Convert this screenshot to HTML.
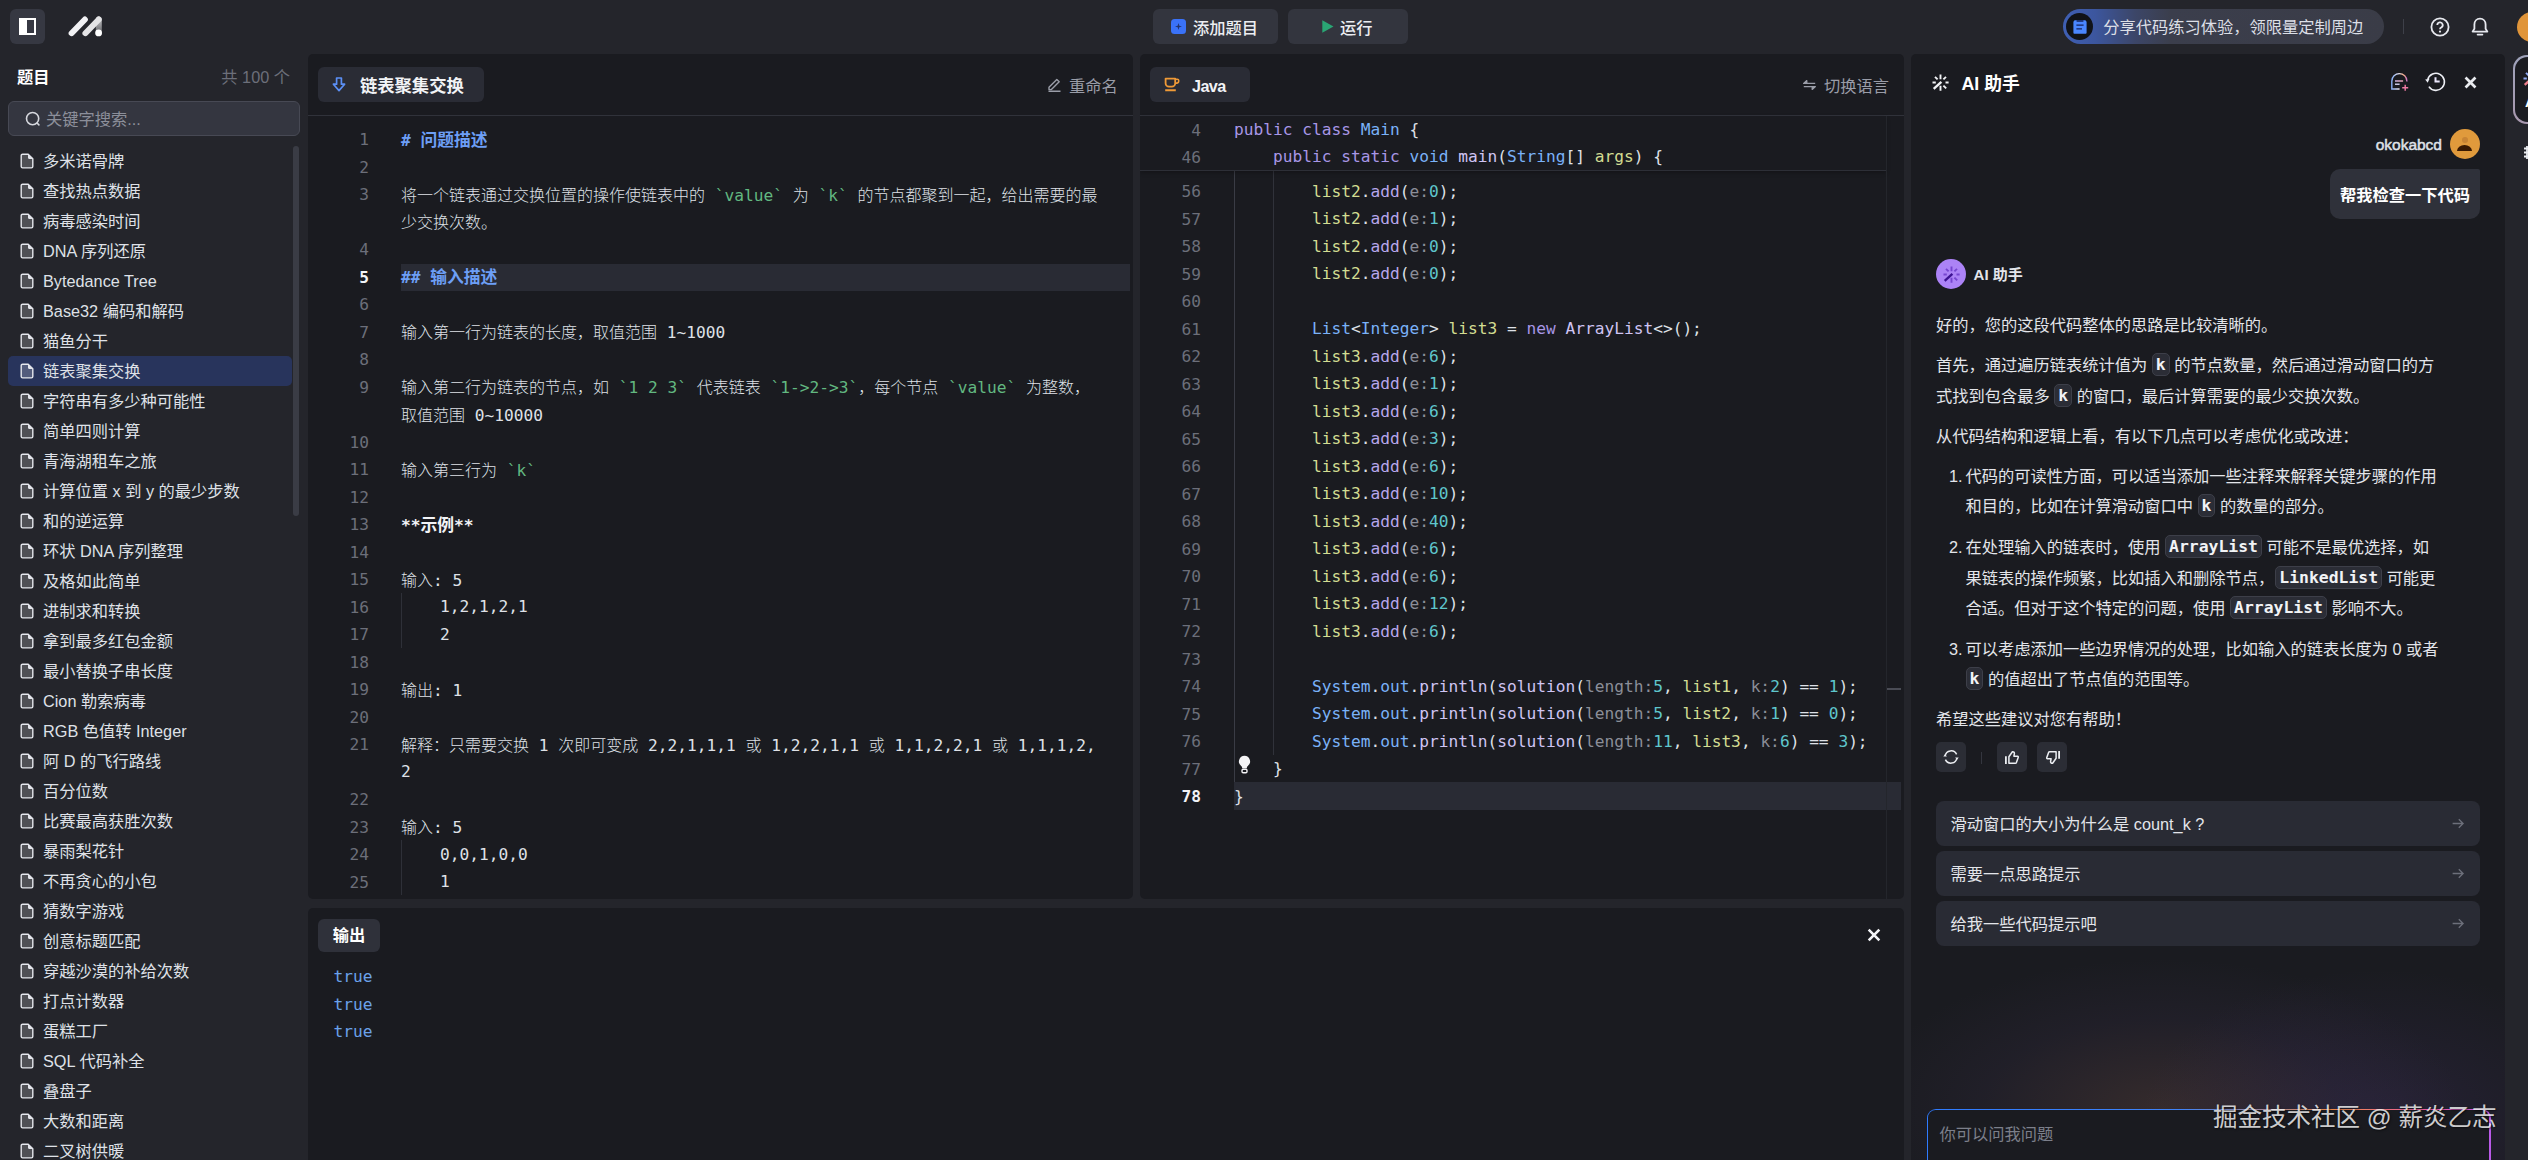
<!DOCTYPE html>
<html lang="zh-CN"><head><meta charset="utf-8"><title>豆包 MarsCode 代码练习</title>
<style>
*{box-sizing:border-box;margin:0;padding:0}
html,body{width:2528px;height:1160px;overflow:hidden;background:#24252b}
body{position:relative;font-family:"Liberation Sans","Noto Sans CJK SC",sans-serif;font-size:16.25px;color:#dfe1e7;-webkit-font-smoothing:antialiased}
.abs{position:absolute}
.panel{position:absolute;background:#1a1b20;border-radius:5px;overflow:hidden}
.mono{font-family:"DejaVu Sans Mono","Liberation Mono","Noto Sans CJK SC",monospace}
svg{display:block;overflow:visible}
/* top bar */
#tog{left:10px;top:9px;width:35px;height:35px;border-radius:6px;background:#363842}
.tbtn{top:9px;height:35px;border-radius:6px;background:#33353e;color:#eceef2;font-weight:500;font-size:16.25px;line-height:35px;white-space:nowrap}
#pill{left:2063px;top:9px;width:321px;height:35px;border-radius:18px;background:linear-gradient(90deg,#3f5fb4 0px,#3c569e 32px,#3c4668 72px,#3b3e4c 108px,#3a3c47 100%);color:#dcdfe6;line-height:35px;white-space:nowrap}
/* sidebar */
.it{position:absolute;left:8px;width:284px;height:30px;border-radius:5px;line-height:30px;white-space:nowrap;color:#dfe1e7}
.it span{position:absolute;left:35px;top:0}
.it svg{position:absolute;left:12px;top:7px}
.it.sel{background:#28345c}
/* editor */
.ln{position:absolute;height:27.5px;line-height:27.5px;margin-top:1.2px;text-align:right;color:#6c6f7a;font-size:16.2px;white-space:pre}
.cl{position:absolute;height:27.5px;line-height:27.5px;margin-top:.4px;font-size:16.2px;white-space:pre;color:#dfe1e7}
.tab{position:absolute;top:13px;height:35px;border-radius:6px;background:#2a2c35;color:#f2f3f6;font-weight:bold;font-size:17.3px;line-height:35px;white-space:nowrap}
.hdr{position:absolute;left:0;top:0;right:0;height:62px;border-bottom:1px solid #30323a}
.gray{color:#9a9da8}
/* syntax */
.k{color:#a896e6}.t{color:#7ab2f8}.f{color:#cfc4f3}.v{color:#d3dd92}.m{color:#b8a7ec}.n{color:#5fc6cc}.h{color:#8b8e98}.p{color:#dfe1e7}
.mh{color:#6d9ff6;font-weight:bold}.mc{color:#62b880}.mb{color:#f2f3f6;font-weight:bold}
.cj{font-family:"Noto Sans CJK SC",sans-serif;font-weight:300;font-size:16px}
.cjb{font-family:"Noto Sans CJK SC",sans-serif;font-weight:bold;font-size:16.8px}
/* ai */
.aip{position:absolute;left:25px;white-space:nowrap;line-height:30.5px;font-size:16.25px;color:#e3e5ea}
.ic{display:inline-block;font-family:"DejaVu Sans Mono","Liberation Mono",monospace;font-weight:bold;font-size:16.4px;line-height:21px;height:23px;padding:0 3px;margin:0 4.6px;border:1px solid #3d3f49;background:#2b2d36;border-radius:5px;color:#f2f3f6;vertical-align:1px}
.abtn{position:absolute;top:688px;width:30px;height:30px;border-radius:5px;background:#2b2d35}
.sug{position:absolute;left:25px;width:544px;height:45px;border-radius:8px;background:#292b34;line-height:45px;color:#e3e5ea;white-space:nowrap}
.sug span{position:absolute;left:14.6px;top:1.3px}
</style></head>
<body>
<div id="tog" class="abs"><svg class="abs" style="left:9px;top:9px" width="17" height="17" viewBox="0 0 17 17"><rect x="1" y="1" width="15" height="15" fill="none" stroke="#fff" stroke-width="2"/><rect x="0" y="0" width="8" height="17" fill="#fff"/></svg></div>
<svg class="abs" style="left:66px;top:14px" width="38" height="24" viewBox="0 0 38 24"><defs><linearGradient id="lg1" x1="0" y1="0" x2="0" y2="1"><stop offset="0" stop-color="#d6d6d8"/><stop offset=".35" stop-color="#a9a9ad"/><stop offset="1" stop-color="#66676b"/></linearGradient></defs><path d="M29.8 5.4 a3 3 0 0 1 6 0 V19 H29.8Z" fill="url(#lg1)"/><line x1="5.6" y1="19.2" x2="18.9" y2="5.5" stroke="#f1f1f4" stroke-width="5.9" stroke-linecap="round"/><line x1="19.4" y1="19.2" x2="32.7" y2="5.5" stroke="#e4e4e6" stroke-width="5.9" stroke-linecap="round"/><circle cx="32.6" cy="18.9" r="3.4" fill="#fff"/></svg>
<div class="tbtn abs" style="left:1153px;width:125px"><svg class="abs" style="left:18px;top:10px" width="15" height="15" viewBox="0 0 15 15"><rect width="15" height="15" rx="3.5" fill="#3a72f8"/><path d="M7.5 4 L8.3 6.7 L11 7.5 L8.3 8.3 L7.5 11 L6.7 8.3 L4 7.5 L6.7 6.7Z" fill="#22346e"/></svg><span class="abs" style="left:40px;top:1.5px">添加题目</span></div>
<div class="tbtn abs" style="left:1288px;width:120px"><svg class="abs" style="left:34px;top:11px" width="12" height="13" viewBox="0 0 12 13"><path d="M0.3 0.3 L11.5 6.5 L0.3 12.7Z" fill="#2aa574"/></svg><span class="abs" style="left:52px;top:1.5px">运行</span></div>
<div id="pill" class="abs"><div class="abs" style="left:2.6px;top:3.6px;width:27.8px;height:27.8px;border-radius:50%;background:#111318"></div><svg class="abs" style="left:9.6px;top:10px" width="14" height="15" viewBox="0 0 14 15"><path d="M1.6 1.2h10.8l1.2 1.6v11a.9.9 0 0 1-.9.9H1.3a.9.9 0 0 1-.9-.9v-11z" fill="#4a86ff"/><path d="M3.6 2h6.8M3.4 6.2h7.2M3.4 9.8h5.6" stroke="#15235e" stroke-width="1.3"/></svg><span class="abs" style="left:40.2px;top:1px">分享代码练习体验，领限量定制周边</span></div>
<div class="abs" style="left:2403px;top:19px;width:1px;height:15px;background:#3e4049"></div>
<svg class="abs" style="left:2430px;top:17px" width="20" height="20" viewBox="0 0 20 20"><circle cx="10" cy="10" r="8.6" fill="none" stroke="#e6e8ee" stroke-width="1.8"/><path d="M7.3 8.1a2.7 2.7 0 1 1 3.9 2.4c-.8.45-1.2.9-1.2 1.8" fill="none" stroke="#e6e8ee" stroke-width="1.8"/><circle cx="10" cy="14.6" r="1.1" fill="#e6e8ee"/></svg>
<svg class="abs" style="left:2470px;top:17px" width="20" height="20" viewBox="0 0 20 20"><path d="M10 1.6c-3.3 0-5.6 2.5-5.6 5.8v4.3L2.6 14.6h14.8l-1.8-2.9V7.4c0-3.3-2.3-5.8-5.6-5.8z" fill="none" stroke="#e6e8ee" stroke-width="1.8" stroke-linejoin="round"/><path d="M7.6 17.6h4.8" stroke="#e6e8ee" stroke-width="1.8" stroke-linecap="round"/></svg>
<div class="abs" style="left:2517px;top:12px;width:30px;height:30px;border-radius:50%;background:#e0953a"></div>
<div class="abs" style="left:17px;top:65px;font-weight:bold;font-size:16.25px;line-height:25px;color:#fff">题目</div>
<div class="abs" style="left:160px;width:130px;text-align:right;top:65px;line-height:25px;color:#6c6f7a;white-space:nowrap">共 100 个</div>
<div class="abs" style="left:8px;top:101px;width:292px;height:35px;border-radius:6px;background:#343640;border:1px solid #474954"><svg class="abs" style="left:16px;top:9px" width="16" height="16" viewBox="0 0 16 16"><circle cx="7.6" cy="7.6" r="6.1" fill="none" stroke="#d6d8de" stroke-width="1.6"/><path d="M12.3 12.3l1.6 1.6" stroke="#d6d8de" stroke-width="1.6" stroke-linecap="round"/></svg><span class="abs" style="left:37px;top:0;line-height:34px;color:#8c8f9a">关键字搜索...</span></div>
<div class="it" style="top:146px"><svg width="14" height="16" viewBox="0 0 14 16"><path d="M2.6 1.2h5.6l4.6 4.5v7.9c0 .8-.6 1.3-1.4 1.3H2.6c-.8 0-1.4-.5-1.4-1.3V2.5c0-.8.6-1.3 1.4-1.3z" fill="rgba(255,255,255,.2)" stroke="#e4e6ec" stroke-width="1.4" stroke-linejoin="round"/><path d="M8 1.2l4.8 4.7H9.2c-.7 0-1.2-.5-1.2-1.2z" fill="#e4e6ec"/></svg><span>多米诺骨牌</span></div>
<div class="it" style="top:176px"><svg width="14" height="16" viewBox="0 0 14 16"><path d="M2.6 1.2h5.6l4.6 4.5v7.9c0 .8-.6 1.3-1.4 1.3H2.6c-.8 0-1.4-.5-1.4-1.3V2.5c0-.8.6-1.3 1.4-1.3z" fill="rgba(255,255,255,.2)" stroke="#e4e6ec" stroke-width="1.4" stroke-linejoin="round"/><path d="M8 1.2l4.8 4.7H9.2c-.7 0-1.2-.5-1.2-1.2z" fill="#e4e6ec"/></svg><span>查找热点数据</span></div>
<div class="it" style="top:206px"><svg width="14" height="16" viewBox="0 0 14 16"><path d="M2.6 1.2h5.6l4.6 4.5v7.9c0 .8-.6 1.3-1.4 1.3H2.6c-.8 0-1.4-.5-1.4-1.3V2.5c0-.8.6-1.3 1.4-1.3z" fill="rgba(255,255,255,.2)" stroke="#e4e6ec" stroke-width="1.4" stroke-linejoin="round"/><path d="M8 1.2l4.8 4.7H9.2c-.7 0-1.2-.5-1.2-1.2z" fill="#e4e6ec"/></svg><span>病毒感染时间</span></div>
<div class="it" style="top:236px"><svg width="14" height="16" viewBox="0 0 14 16"><path d="M2.6 1.2h5.6l4.6 4.5v7.9c0 .8-.6 1.3-1.4 1.3H2.6c-.8 0-1.4-.5-1.4-1.3V2.5c0-.8.6-1.3 1.4-1.3z" fill="rgba(255,255,255,.2)" stroke="#e4e6ec" stroke-width="1.4" stroke-linejoin="round"/><path d="M8 1.2l4.8 4.7H9.2c-.7 0-1.2-.5-1.2-1.2z" fill="#e4e6ec"/></svg><span>DNA 序列还原</span></div>
<div class="it" style="top:266px"><svg width="14" height="16" viewBox="0 0 14 16"><path d="M2.6 1.2h5.6l4.6 4.5v7.9c0 .8-.6 1.3-1.4 1.3H2.6c-.8 0-1.4-.5-1.4-1.3V2.5c0-.8.6-1.3 1.4-1.3z" fill="rgba(255,255,255,.2)" stroke="#e4e6ec" stroke-width="1.4" stroke-linejoin="round"/><path d="M8 1.2l4.8 4.7H9.2c-.7 0-1.2-.5-1.2-1.2z" fill="#e4e6ec"/></svg><span>Bytedance Tree</span></div>
<div class="it" style="top:296px"><svg width="14" height="16" viewBox="0 0 14 16"><path d="M2.6 1.2h5.6l4.6 4.5v7.9c0 .8-.6 1.3-1.4 1.3H2.6c-.8 0-1.4-.5-1.4-1.3V2.5c0-.8.6-1.3 1.4-1.3z" fill="rgba(255,255,255,.2)" stroke="#e4e6ec" stroke-width="1.4" stroke-linejoin="round"/><path d="M8 1.2l4.8 4.7H9.2c-.7 0-1.2-.5-1.2-1.2z" fill="#e4e6ec"/></svg><span>Base32 编码和解码</span></div>
<div class="it" style="top:326px"><svg width="14" height="16" viewBox="0 0 14 16"><path d="M2.6 1.2h5.6l4.6 4.5v7.9c0 .8-.6 1.3-1.4 1.3H2.6c-.8 0-1.4-.5-1.4-1.3V2.5c0-.8.6-1.3 1.4-1.3z" fill="rgba(255,255,255,.2)" stroke="#e4e6ec" stroke-width="1.4" stroke-linejoin="round"/><path d="M8 1.2l4.8 4.7H9.2c-.7 0-1.2-.5-1.2-1.2z" fill="#e4e6ec"/></svg><span>猫鱼分干</span></div>
<div class="it sel" style="top:356px"><svg width="14" height="16" viewBox="0 0 14 16"><path d="M2.6 1.2h5.6l4.6 4.5v7.9c0 .8-.6 1.3-1.4 1.3H2.6c-.8 0-1.4-.5-1.4-1.3V2.5c0-.8.6-1.3 1.4-1.3z" fill="rgba(255,255,255,.2)" stroke="#e4e6ec" stroke-width="1.4" stroke-linejoin="round"/><path d="M8 1.2l4.8 4.7H9.2c-.7 0-1.2-.5-1.2-1.2z" fill="#e4e6ec"/></svg><span>链表聚集交换</span></div>
<div class="it" style="top:386px"><svg width="14" height="16" viewBox="0 0 14 16"><path d="M2.6 1.2h5.6l4.6 4.5v7.9c0 .8-.6 1.3-1.4 1.3H2.6c-.8 0-1.4-.5-1.4-1.3V2.5c0-.8.6-1.3 1.4-1.3z" fill="rgba(255,255,255,.2)" stroke="#e4e6ec" stroke-width="1.4" stroke-linejoin="round"/><path d="M8 1.2l4.8 4.7H9.2c-.7 0-1.2-.5-1.2-1.2z" fill="#e4e6ec"/></svg><span>字符串有多少种可能性</span></div>
<div class="it" style="top:416px"><svg width="14" height="16" viewBox="0 0 14 16"><path d="M2.6 1.2h5.6l4.6 4.5v7.9c0 .8-.6 1.3-1.4 1.3H2.6c-.8 0-1.4-.5-1.4-1.3V2.5c0-.8.6-1.3 1.4-1.3z" fill="rgba(255,255,255,.2)" stroke="#e4e6ec" stroke-width="1.4" stroke-linejoin="round"/><path d="M8 1.2l4.8 4.7H9.2c-.7 0-1.2-.5-1.2-1.2z" fill="#e4e6ec"/></svg><span>简单四则计算</span></div>
<div class="it" style="top:446px"><svg width="14" height="16" viewBox="0 0 14 16"><path d="M2.6 1.2h5.6l4.6 4.5v7.9c0 .8-.6 1.3-1.4 1.3H2.6c-.8 0-1.4-.5-1.4-1.3V2.5c0-.8.6-1.3 1.4-1.3z" fill="rgba(255,255,255,.2)" stroke="#e4e6ec" stroke-width="1.4" stroke-linejoin="round"/><path d="M8 1.2l4.8 4.7H9.2c-.7 0-1.2-.5-1.2-1.2z" fill="#e4e6ec"/></svg><span>青海湖租车之旅</span></div>
<div class="it" style="top:476px"><svg width="14" height="16" viewBox="0 0 14 16"><path d="M2.6 1.2h5.6l4.6 4.5v7.9c0 .8-.6 1.3-1.4 1.3H2.6c-.8 0-1.4-.5-1.4-1.3V2.5c0-.8.6-1.3 1.4-1.3z" fill="rgba(255,255,255,.2)" stroke="#e4e6ec" stroke-width="1.4" stroke-linejoin="round"/><path d="M8 1.2l4.8 4.7H9.2c-.7 0-1.2-.5-1.2-1.2z" fill="#e4e6ec"/></svg><span>计算位置 x 到 y 的最少步数</span></div>
<div class="it" style="top:506px"><svg width="14" height="16" viewBox="0 0 14 16"><path d="M2.6 1.2h5.6l4.6 4.5v7.9c0 .8-.6 1.3-1.4 1.3H2.6c-.8 0-1.4-.5-1.4-1.3V2.5c0-.8.6-1.3 1.4-1.3z" fill="rgba(255,255,255,.2)" stroke="#e4e6ec" stroke-width="1.4" stroke-linejoin="round"/><path d="M8 1.2l4.8 4.7H9.2c-.7 0-1.2-.5-1.2-1.2z" fill="#e4e6ec"/></svg><span>和的逆运算</span></div>
<div class="it" style="top:536px"><svg width="14" height="16" viewBox="0 0 14 16"><path d="M2.6 1.2h5.6l4.6 4.5v7.9c0 .8-.6 1.3-1.4 1.3H2.6c-.8 0-1.4-.5-1.4-1.3V2.5c0-.8.6-1.3 1.4-1.3z" fill="rgba(255,255,255,.2)" stroke="#e4e6ec" stroke-width="1.4" stroke-linejoin="round"/><path d="M8 1.2l4.8 4.7H9.2c-.7 0-1.2-.5-1.2-1.2z" fill="#e4e6ec"/></svg><span>环状 DNA 序列整理</span></div>
<div class="it" style="top:566px"><svg width="14" height="16" viewBox="0 0 14 16"><path d="M2.6 1.2h5.6l4.6 4.5v7.9c0 .8-.6 1.3-1.4 1.3H2.6c-.8 0-1.4-.5-1.4-1.3V2.5c0-.8.6-1.3 1.4-1.3z" fill="rgba(255,255,255,.2)" stroke="#e4e6ec" stroke-width="1.4" stroke-linejoin="round"/><path d="M8 1.2l4.8 4.7H9.2c-.7 0-1.2-.5-1.2-1.2z" fill="#e4e6ec"/></svg><span>及格如此简单</span></div>
<div class="it" style="top:596px"><svg width="14" height="16" viewBox="0 0 14 16"><path d="M2.6 1.2h5.6l4.6 4.5v7.9c0 .8-.6 1.3-1.4 1.3H2.6c-.8 0-1.4-.5-1.4-1.3V2.5c0-.8.6-1.3 1.4-1.3z" fill="rgba(255,255,255,.2)" stroke="#e4e6ec" stroke-width="1.4" stroke-linejoin="round"/><path d="M8 1.2l4.8 4.7H9.2c-.7 0-1.2-.5-1.2-1.2z" fill="#e4e6ec"/></svg><span>进制求和转换</span></div>
<div class="it" style="top:626px"><svg width="14" height="16" viewBox="0 0 14 16"><path d="M2.6 1.2h5.6l4.6 4.5v7.9c0 .8-.6 1.3-1.4 1.3H2.6c-.8 0-1.4-.5-1.4-1.3V2.5c0-.8.6-1.3 1.4-1.3z" fill="rgba(255,255,255,.2)" stroke="#e4e6ec" stroke-width="1.4" stroke-linejoin="round"/><path d="M8 1.2l4.8 4.7H9.2c-.7 0-1.2-.5-1.2-1.2z" fill="#e4e6ec"/></svg><span>拿到最多红包金额</span></div>
<div class="it" style="top:656px"><svg width="14" height="16" viewBox="0 0 14 16"><path d="M2.6 1.2h5.6l4.6 4.5v7.9c0 .8-.6 1.3-1.4 1.3H2.6c-.8 0-1.4-.5-1.4-1.3V2.5c0-.8.6-1.3 1.4-1.3z" fill="rgba(255,255,255,.2)" stroke="#e4e6ec" stroke-width="1.4" stroke-linejoin="round"/><path d="M8 1.2l4.8 4.7H9.2c-.7 0-1.2-.5-1.2-1.2z" fill="#e4e6ec"/></svg><span>最小替换子串长度</span></div>
<div class="it" style="top:686px"><svg width="14" height="16" viewBox="0 0 14 16"><path d="M2.6 1.2h5.6l4.6 4.5v7.9c0 .8-.6 1.3-1.4 1.3H2.6c-.8 0-1.4-.5-1.4-1.3V2.5c0-.8.6-1.3 1.4-1.3z" fill="rgba(255,255,255,.2)" stroke="#e4e6ec" stroke-width="1.4" stroke-linejoin="round"/><path d="M8 1.2l4.8 4.7H9.2c-.7 0-1.2-.5-1.2-1.2z" fill="#e4e6ec"/></svg><span>Cion 勒索病毒</span></div>
<div class="it" style="top:716px"><svg width="14" height="16" viewBox="0 0 14 16"><path d="M2.6 1.2h5.6l4.6 4.5v7.9c0 .8-.6 1.3-1.4 1.3H2.6c-.8 0-1.4-.5-1.4-1.3V2.5c0-.8.6-1.3 1.4-1.3z" fill="rgba(255,255,255,.2)" stroke="#e4e6ec" stroke-width="1.4" stroke-linejoin="round"/><path d="M8 1.2l4.8 4.7H9.2c-.7 0-1.2-.5-1.2-1.2z" fill="#e4e6ec"/></svg><span>RGB 色值转 Integer</span></div>
<div class="it" style="top:746px"><svg width="14" height="16" viewBox="0 0 14 16"><path d="M2.6 1.2h5.6l4.6 4.5v7.9c0 .8-.6 1.3-1.4 1.3H2.6c-.8 0-1.4-.5-1.4-1.3V2.5c0-.8.6-1.3 1.4-1.3z" fill="rgba(255,255,255,.2)" stroke="#e4e6ec" stroke-width="1.4" stroke-linejoin="round"/><path d="M8 1.2l4.8 4.7H9.2c-.7 0-1.2-.5-1.2-1.2z" fill="#e4e6ec"/></svg><span>阿 D 的飞行路线</span></div>
<div class="it" style="top:776px"><svg width="14" height="16" viewBox="0 0 14 16"><path d="M2.6 1.2h5.6l4.6 4.5v7.9c0 .8-.6 1.3-1.4 1.3H2.6c-.8 0-1.4-.5-1.4-1.3V2.5c0-.8.6-1.3 1.4-1.3z" fill="rgba(255,255,255,.2)" stroke="#e4e6ec" stroke-width="1.4" stroke-linejoin="round"/><path d="M8 1.2l4.8 4.7H9.2c-.7 0-1.2-.5-1.2-1.2z" fill="#e4e6ec"/></svg><span>百分位数</span></div>
<div class="it" style="top:806px"><svg width="14" height="16" viewBox="0 0 14 16"><path d="M2.6 1.2h5.6l4.6 4.5v7.9c0 .8-.6 1.3-1.4 1.3H2.6c-.8 0-1.4-.5-1.4-1.3V2.5c0-.8.6-1.3 1.4-1.3z" fill="rgba(255,255,255,.2)" stroke="#e4e6ec" stroke-width="1.4" stroke-linejoin="round"/><path d="M8 1.2l4.8 4.7H9.2c-.7 0-1.2-.5-1.2-1.2z" fill="#e4e6ec"/></svg><span>比赛最高获胜次数</span></div>
<div class="it" style="top:836px"><svg width="14" height="16" viewBox="0 0 14 16"><path d="M2.6 1.2h5.6l4.6 4.5v7.9c0 .8-.6 1.3-1.4 1.3H2.6c-.8 0-1.4-.5-1.4-1.3V2.5c0-.8.6-1.3 1.4-1.3z" fill="rgba(255,255,255,.2)" stroke="#e4e6ec" stroke-width="1.4" stroke-linejoin="round"/><path d="M8 1.2l4.8 4.7H9.2c-.7 0-1.2-.5-1.2-1.2z" fill="#e4e6ec"/></svg><span>暴雨梨花针</span></div>
<div class="it" style="top:866px"><svg width="14" height="16" viewBox="0 0 14 16"><path d="M2.6 1.2h5.6l4.6 4.5v7.9c0 .8-.6 1.3-1.4 1.3H2.6c-.8 0-1.4-.5-1.4-1.3V2.5c0-.8.6-1.3 1.4-1.3z" fill="rgba(255,255,255,.2)" stroke="#e4e6ec" stroke-width="1.4" stroke-linejoin="round"/><path d="M8 1.2l4.8 4.7H9.2c-.7 0-1.2-.5-1.2-1.2z" fill="#e4e6ec"/></svg><span>不再贪心的小包</span></div>
<div class="it" style="top:896px"><svg width="14" height="16" viewBox="0 0 14 16"><path d="M2.6 1.2h5.6l4.6 4.5v7.9c0 .8-.6 1.3-1.4 1.3H2.6c-.8 0-1.4-.5-1.4-1.3V2.5c0-.8.6-1.3 1.4-1.3z" fill="rgba(255,255,255,.2)" stroke="#e4e6ec" stroke-width="1.4" stroke-linejoin="round"/><path d="M8 1.2l4.8 4.7H9.2c-.7 0-1.2-.5-1.2-1.2z" fill="#e4e6ec"/></svg><span>猜数字游戏</span></div>
<div class="it" style="top:926px"><svg width="14" height="16" viewBox="0 0 14 16"><path d="M2.6 1.2h5.6l4.6 4.5v7.9c0 .8-.6 1.3-1.4 1.3H2.6c-.8 0-1.4-.5-1.4-1.3V2.5c0-.8.6-1.3 1.4-1.3z" fill="rgba(255,255,255,.2)" stroke="#e4e6ec" stroke-width="1.4" stroke-linejoin="round"/><path d="M8 1.2l4.8 4.7H9.2c-.7 0-1.2-.5-1.2-1.2z" fill="#e4e6ec"/></svg><span>创意标题匹配</span></div>
<div class="it" style="top:956px"><svg width="14" height="16" viewBox="0 0 14 16"><path d="M2.6 1.2h5.6l4.6 4.5v7.9c0 .8-.6 1.3-1.4 1.3H2.6c-.8 0-1.4-.5-1.4-1.3V2.5c0-.8.6-1.3 1.4-1.3z" fill="rgba(255,255,255,.2)" stroke="#e4e6ec" stroke-width="1.4" stroke-linejoin="round"/><path d="M8 1.2l4.8 4.7H9.2c-.7 0-1.2-.5-1.2-1.2z" fill="#e4e6ec"/></svg><span>穿越沙漠的补给次数</span></div>
<div class="it" style="top:986px"><svg width="14" height="16" viewBox="0 0 14 16"><path d="M2.6 1.2h5.6l4.6 4.5v7.9c0 .8-.6 1.3-1.4 1.3H2.6c-.8 0-1.4-.5-1.4-1.3V2.5c0-.8.6-1.3 1.4-1.3z" fill="rgba(255,255,255,.2)" stroke="#e4e6ec" stroke-width="1.4" stroke-linejoin="round"/><path d="M8 1.2l4.8 4.7H9.2c-.7 0-1.2-.5-1.2-1.2z" fill="#e4e6ec"/></svg><span>打点计数器</span></div>
<div class="it" style="top:1016px"><svg width="14" height="16" viewBox="0 0 14 16"><path d="M2.6 1.2h5.6l4.6 4.5v7.9c0 .8-.6 1.3-1.4 1.3H2.6c-.8 0-1.4-.5-1.4-1.3V2.5c0-.8.6-1.3 1.4-1.3z" fill="rgba(255,255,255,.2)" stroke="#e4e6ec" stroke-width="1.4" stroke-linejoin="round"/><path d="M8 1.2l4.8 4.7H9.2c-.7 0-1.2-.5-1.2-1.2z" fill="#e4e6ec"/></svg><span>蛋糕工厂</span></div>
<div class="it" style="top:1046px"><svg width="14" height="16" viewBox="0 0 14 16"><path d="M2.6 1.2h5.6l4.6 4.5v7.9c0 .8-.6 1.3-1.4 1.3H2.6c-.8 0-1.4-.5-1.4-1.3V2.5c0-.8.6-1.3 1.4-1.3z" fill="rgba(255,255,255,.2)" stroke="#e4e6ec" stroke-width="1.4" stroke-linejoin="round"/><path d="M8 1.2l4.8 4.7H9.2c-.7 0-1.2-.5-1.2-1.2z" fill="#e4e6ec"/></svg><span>SQL 代码补全</span></div>
<div class="it" style="top:1076px"><svg width="14" height="16" viewBox="0 0 14 16"><path d="M2.6 1.2h5.6l4.6 4.5v7.9c0 .8-.6 1.3-1.4 1.3H2.6c-.8 0-1.4-.5-1.4-1.3V2.5c0-.8.6-1.3 1.4-1.3z" fill="rgba(255,255,255,.2)" stroke="#e4e6ec" stroke-width="1.4" stroke-linejoin="round"/><path d="M8 1.2l4.8 4.7H9.2c-.7 0-1.2-.5-1.2-1.2z" fill="#e4e6ec"/></svg><span>叠盘子</span></div>
<div class="it" style="top:1106px"><svg width="14" height="16" viewBox="0 0 14 16"><path d="M2.6 1.2h5.6l4.6 4.5v7.9c0 .8-.6 1.3-1.4 1.3H2.6c-.8 0-1.4-.5-1.4-1.3V2.5c0-.8.6-1.3 1.4-1.3z" fill="rgba(255,255,255,.2)" stroke="#e4e6ec" stroke-width="1.4" stroke-linejoin="round"/><path d="M8 1.2l4.8 4.7H9.2c-.7 0-1.2-.5-1.2-1.2z" fill="#e4e6ec"/></svg><span>大数和距离</span></div>
<div class="it" style="top:1136px"><svg width="14" height="16" viewBox="0 0 14 16"><path d="M2.6 1.2h5.6l4.6 4.5v7.9c0 .8-.6 1.3-1.4 1.3H2.6c-.8 0-1.4-.5-1.4-1.3V2.5c0-.8.6-1.3 1.4-1.3z" fill="rgba(255,255,255,.2)" stroke="#e4e6ec" stroke-width="1.4" stroke-linejoin="round"/><path d="M8 1.2l4.8 4.7H9.2c-.7 0-1.2-.5-1.2-1.2z" fill="#e4e6ec"/></svg><span>二叉树供暖</span></div>
<div class="abs" style="left:293px;top:146px;width:6px;height:370px;border-radius:3px;background:#3a3c45"></div>
<div class="panel" style="left:308px;top:54px;width:825px;height:845px">
<div class="hdr"></div>
<div class="tab" style="left:10px;width:166px"><svg class="abs" style="left:14px;top:10px" width="14" height="15" viewBox="0 0 14 15"><path d="M4.6 1h4.8v6.2h3.2L7 13.6 1.4 7.2h3.2z" fill="none" stroke="#5b8ff5" stroke-width="1.7" stroke-linejoin="round"/></svg><span class="abs" style="left:42px;top:1.8px">链表聚集交换</span></div>
<svg class="abs" style="left:738.5px;top:22.6px" width="15" height="15" viewBox="0 0 15 15"><path d="M2 10.2L9.8 2.4l2.4 2.4L4.4 12.6H2z" fill="none" stroke="#9a9da8" stroke-width="1.4" stroke-linejoin="round"/><path d="M1.5 14.2h12" stroke="#9a9da8" stroke-width="1.4"/></svg>
<div class="abs gray" style="left:761px;top:18px;line-height:28px;white-space:nowrap">重命名</div>
<div class="abs" style="left:93px;top:209.50px;width:729px;height:27px;background:#292b34"></div>
<div class="abs" style="left:93px;top:538.75px;width:1px;height:55.00px;background:#2e3038"></div>
<div class="abs" style="left:93px;top:786.25px;width:1px;height:55.00px;background:#2e3038"></div>
<div class="ln mono" style="left:0;width:61px;top:71.25px">1</div>
<div class="cl mono" style="left:93px;top:71.25px"><span class="mh"># <span class="cjb">问题描述</span></span></div>
<div class="ln mono" style="left:0;width:61px;top:98.75px">2</div>
<div class="ln mono" style="left:0;width:61px;top:126.25px">3</div>
<div class="cl mono" style="left:93px;top:126.25px"><span class="cj">将一个链表通过交换位置的操作使链表中的</span> <span class="mc">`value`</span> <span class="cj">为</span> <span class="mc">`k`</span> <span class="cj">的节点都聚到一起，给出需要的最</span></div>
<div class="cl mono" style="left:93px;top:153.75px"><span class="cj">少交换次数。</span></div>
<div class="ln mono" style="left:0;width:61px;top:181.25px">4</div>
<div class="ln mono" style="left:0;width:61px;top:208.75px;color:#f2f3f6;font-weight:bold">5</div>
<div class="cl mono" style="left:93px;top:208.75px"><span class="mh">## <span class="cjb">输入描述</span></span></div>
<div class="ln mono" style="left:0;width:61px;top:236.25px">6</div>
<div class="ln mono" style="left:0;width:61px;top:263.75px">7</div>
<div class="cl mono" style="left:93px;top:263.75px"><span class="cj">输入第一行为链表的长度，取值范围</span> 1~1000</div>
<div class="ln mono" style="left:0;width:61px;top:291.25px">8</div>
<div class="ln mono" style="left:0;width:61px;top:318.75px">9</div>
<div class="cl mono" style="left:93px;top:318.75px"><span class="cj">输入第二行为链表的节点，如</span> <span class="mc">`1 2 3`</span> <span class="cj">代表链表</span> <span class="mc">`1-&gt;2-&gt;3`</span><span class="cj">，每个节点</span> <span class="mc">`value`</span> <span class="cj">为整数，</span></div>
<div class="cl mono" style="left:93px;top:346.25px"><span class="cj">取值范围</span> 0~10000</div>
<div class="ln mono" style="left:0;width:61px;top:373.75px">10</div>
<div class="ln mono" style="left:0;width:61px;top:401.25px">11</div>
<div class="cl mono" style="left:93px;top:401.25px"><span class="cj">输入第三行为</span> <span class="mc">`k`</span></div>
<div class="ln mono" style="left:0;width:61px;top:428.75px">12</div>
<div class="ln mono" style="left:0;width:61px;top:456.25px">13</div>
<div class="cl mono" style="left:93px;top:456.25px"><span class="mb">**<span class="cjb">示例</span>**</span></div>
<div class="ln mono" style="left:0;width:61px;top:483.75px">14</div>
<div class="ln mono" style="left:0;width:61px;top:511.25px">15</div>
<div class="cl mono" style="left:93px;top:511.25px"><span class="cj">输入</span>: 5</div>
<div class="ln mono" style="left:0;width:61px;top:538.75px">16</div>
<div class="cl mono" style="left:93px;top:538.75px">    1,2,1,2,1</div>
<div class="ln mono" style="left:0;width:61px;top:566.25px">17</div>
<div class="cl mono" style="left:93px;top:566.25px">    2</div>
<div class="ln mono" style="left:0;width:61px;top:593.75px">18</div>
<div class="ln mono" style="left:0;width:61px;top:621.25px">19</div>
<div class="cl mono" style="left:93px;top:621.25px"><span class="cj">输出</span>: 1</div>
<div class="ln mono" style="left:0;width:61px;top:648.75px">20</div>
<div class="ln mono" style="left:0;width:61px;top:676.25px">21</div>
<div class="cl mono" style="left:93px;top:676.25px"><span class="cj">解释：只需要交换</span> 1 <span class="cj">次即可变成</span> 2,2,1,1,1 <span class="cj">或</span> 1,2,2,1,1 <span class="cj">或</span> 1,1,2,2,1 <span class="cj">或</span> 1,1,1,2,</div>
<div class="cl mono" style="left:93px;top:703.75px">2</div>
<div class="ln mono" style="left:0;width:61px;top:731.25px">22</div>
<div class="ln mono" style="left:0;width:61px;top:758.75px">23</div>
<div class="cl mono" style="left:93px;top:758.75px"><span class="cj">输入</span>: 5</div>
<div class="ln mono" style="left:0;width:61px;top:786.25px">24</div>
<div class="cl mono" style="left:93px;top:786.25px">    0,0,1,0,0</div>
<div class="ln mono" style="left:0;width:61px;top:813.75px">25</div>
<div class="cl mono" style="left:93px;top:813.75px">    1</div>
</div>
<div class="panel" style="left:1140px;top:54px;width:764px;height:845px">
<div class="hdr"></div>
<div class="tab" style="left:10px;width:100px"><svg class="abs" style="left:14px;top:10px" width="16" height="15" viewBox="0 0 16 15"><path d="M1.6 1.6h9.6v4.6a3.4 3.4 0 0 1-3.4 3.4H5a3.4 3.4 0 0 1-3.4-3.4z" fill="none" stroke="#f09a37" stroke-width="1.8" stroke-linejoin="round"/><path d="M11.2 2.2h2.2a1.3 1.3 0 0 1 1.3 1.3v.6a2 2 0 0 1-2 2h-1.5" fill="none" stroke="#f09a37" stroke-width="1.6"/><path d="M1.2 13.3h10.6" stroke="#f09a37" stroke-width="1.9"/></svg><span class="abs" style="left:42px;top:1.5px;font-size:16.2px;letter-spacing:-.6px">Java</span></div>
<svg class="abs" style="left:662.5px;top:26px" width="13" height="10" viewBox="0 0 13 10"><path d="M.6 3.4h11.6M.6 3.4L3.8.6v2.8z" fill="#9a9da8" stroke="#9a9da8" stroke-width="1.3" stroke-linejoin="round"/><path d="M12.4 6.6H.8M12.4 6.6L9.2 9.4V6.6z" fill="#9a9da8" stroke="#9a9da8" stroke-width="1.3" stroke-linejoin="round"/></svg>
<div class="abs gray" style="left:684px;top:18px;line-height:28px;white-space:nowrap">切换语言</div>
<div class="abs" style="left:94px;top:728.25px;width:667px;height:27.5px;background:#292b34"></div>
<div class="abs" style="left:94px;top:117px;width:1px;height:611.25px;background:#3a3c45"></div>
<div class="abs" style="left:133px;top:117px;width:1px;height:583.75px;background:#30323a"></div>
<div class="ln mono" style="left:0;width:61px;top:123.25px">56</div>
<div class="cl mono" style="left:94px;top:123.25px">        <span class="v">list2</span><span class="p">.</span><span class="m">add</span><span class="p">(</span><span class="h ih">e:</span><span class="n">0</span><span class="p">);</span></div>
<div class="ln mono" style="left:0;width:61px;top:150.75px">57</div>
<div class="cl mono" style="left:94px;top:150.75px">        <span class="v">list2</span><span class="p">.</span><span class="m">add</span><span class="p">(</span><span class="h ih">e:</span><span class="n">1</span><span class="p">);</span></div>
<div class="ln mono" style="left:0;width:61px;top:178.25px">58</div>
<div class="cl mono" style="left:94px;top:178.25px">        <span class="v">list2</span><span class="p">.</span><span class="m">add</span><span class="p">(</span><span class="h ih">e:</span><span class="n">0</span><span class="p">);</span></div>
<div class="ln mono" style="left:0;width:61px;top:205.75px">59</div>
<div class="cl mono" style="left:94px;top:205.75px">        <span class="v">list2</span><span class="p">.</span><span class="m">add</span><span class="p">(</span><span class="h ih">e:</span><span class="n">0</span><span class="p">);</span></div>
<div class="ln mono" style="left:0;width:61px;top:233.25px">60</div>
<div class="ln mono" style="left:0;width:61px;top:260.75px">61</div>
<div class="cl mono" style="left:94px;top:260.75px">        <span class="t">List</span><span class="p">&lt;</span><span class="t">Integer</span><span class="p">&gt; </span><span class="v">list3</span><span class="p"> </span><span class="p">=</span><span class="p"> </span><span class="k">new</span><span class="p"> </span><span class="f">ArrayList</span><span class="p">&lt;&gt;();</span></div>
<div class="ln mono" style="left:0;width:61px;top:288.25px">62</div>
<div class="cl mono" style="left:94px;top:288.25px">        <span class="v">list3</span><span class="p">.</span><span class="m">add</span><span class="p">(</span><span class="h ih">e:</span><span class="n">6</span><span class="p">);</span></div>
<div class="ln mono" style="left:0;width:61px;top:315.75px">63</div>
<div class="cl mono" style="left:94px;top:315.75px">        <span class="v">list3</span><span class="p">.</span><span class="m">add</span><span class="p">(</span><span class="h ih">e:</span><span class="n">1</span><span class="p">);</span></div>
<div class="ln mono" style="left:0;width:61px;top:343.25px">64</div>
<div class="cl mono" style="left:94px;top:343.25px">        <span class="v">list3</span><span class="p">.</span><span class="m">add</span><span class="p">(</span><span class="h ih">e:</span><span class="n">6</span><span class="p">);</span></div>
<div class="ln mono" style="left:0;width:61px;top:370.75px">65</div>
<div class="cl mono" style="left:94px;top:370.75px">        <span class="v">list3</span><span class="p">.</span><span class="m">add</span><span class="p">(</span><span class="h ih">e:</span><span class="n">3</span><span class="p">);</span></div>
<div class="ln mono" style="left:0;width:61px;top:398.25px">66</div>
<div class="cl mono" style="left:94px;top:398.25px">        <span class="v">list3</span><span class="p">.</span><span class="m">add</span><span class="p">(</span><span class="h ih">e:</span><span class="n">6</span><span class="p">);</span></div>
<div class="ln mono" style="left:0;width:61px;top:425.75px">67</div>
<div class="cl mono" style="left:94px;top:425.75px">        <span class="v">list3</span><span class="p">.</span><span class="m">add</span><span class="p">(</span><span class="h ih">e:</span><span class="n">10</span><span class="p">);</span></div>
<div class="ln mono" style="left:0;width:61px;top:453.25px">68</div>
<div class="cl mono" style="left:94px;top:453.25px">        <span class="v">list3</span><span class="p">.</span><span class="m">add</span><span class="p">(</span><span class="h ih">e:</span><span class="n">40</span><span class="p">);</span></div>
<div class="ln mono" style="left:0;width:61px;top:480.75px">69</div>
<div class="cl mono" style="left:94px;top:480.75px">        <span class="v">list3</span><span class="p">.</span><span class="m">add</span><span class="p">(</span><span class="h ih">e:</span><span class="n">6</span><span class="p">);</span></div>
<div class="ln mono" style="left:0;width:61px;top:508.25px">70</div>
<div class="cl mono" style="left:94px;top:508.25px">        <span class="v">list3</span><span class="p">.</span><span class="m">add</span><span class="p">(</span><span class="h ih">e:</span><span class="n">6</span><span class="p">);</span></div>
<div class="ln mono" style="left:0;width:61px;top:535.75px">71</div>
<div class="cl mono" style="left:94px;top:535.75px">        <span class="v">list3</span><span class="p">.</span><span class="m">add</span><span class="p">(</span><span class="h ih">e:</span><span class="n">12</span><span class="p">);</span></div>
<div class="ln mono" style="left:0;width:61px;top:563.25px">72</div>
<div class="cl mono" style="left:94px;top:563.25px">        <span class="v">list3</span><span class="p">.</span><span class="m">add</span><span class="p">(</span><span class="h ih">e:</span><span class="n">6</span><span class="p">);</span></div>
<div class="ln mono" style="left:0;width:61px;top:590.75px">73</div>
<div class="ln mono" style="left:0;width:61px;top:618.25px">74</div>
<div class="cl mono" style="left:94px;top:618.25px">        <span class="t">System</span><span class="p">.</span><span class="t">out</span><span class="p">.</span><span class="f">println</span><span class="p">(</span><span class="f">solution</span><span class="p">(</span><span class="h ih">length:</span><span class="n">5</span><span class="p">, </span><span class="v">list1</span><span class="p">, </span><span class="h ih">k:</span><span class="n">2</span><span class="p">) </span><span class="p">==</span><span class="p"> </span><span class="n">1</span><span class="p">);</span></div>
<div class="ln mono" style="left:0;width:61px;top:645.75px">75</div>
<div class="cl mono" style="left:94px;top:645.75px">        <span class="t">System</span><span class="p">.</span><span class="t">out</span><span class="p">.</span><span class="f">println</span><span class="p">(</span><span class="f">solution</span><span class="p">(</span><span class="h ih">length:</span><span class="n">5</span><span class="p">, </span><span class="v">list2</span><span class="p">, </span><span class="h ih">k:</span><span class="n">1</span><span class="p">) </span><span class="p">==</span><span class="p"> </span><span class="n">0</span><span class="p">);</span></div>
<div class="ln mono" style="left:0;width:61px;top:673.25px">76</div>
<div class="cl mono" style="left:94px;top:673.25px">        <span class="t">System</span><span class="p">.</span><span class="t">out</span><span class="p">.</span><span class="f">println</span><span class="p">(</span><span class="f">solution</span><span class="p">(</span><span class="h ih">length:</span><span class="n">11</span><span class="p">, </span><span class="v">list3</span><span class="p">, </span><span class="h ih">k:</span><span class="n">6</span><span class="p">) </span><span class="p">==</span><span class="p"> </span><span class="n">3</span><span class="p">);</span></div>
<div class="ln mono" style="left:0;width:61px;top:700.75px">77</div>
<div class="cl mono" style="left:94px;top:700.75px">    <span class="p">}</span></div>
<div class="ln mono" style="left:0;width:61px;top:728.25px;color:#f2f3f6;font-weight:bold">78</div>
<div class="cl mono" style="left:94px;top:728.25px"><span class="p">}</span></div>
<div class="abs" style="left:0;top:62px;width:746px;height:55px;background:#1a1b20;border-bottom:1px solid #2d2f37;box-shadow:0 2px 4px rgba(0,0,0,.25)"></div>
<div class="ln mono" style="left:0;width:61px;top:61.5px">4</div>
<div class="cl mono" style="left:94px;top:61.5px"><span class="k">public</span> <span class="k">class</span> <span class="t">Main</span> <span class="p">{</span></div>
<div class="ln mono" style="left:0;width:61px;top:89px">46</div>
<div class="cl mono" style="left:94px;top:89px">    <span class="k">public</span> <span class="k">static</span> <span class="t">void</span> <span class="f">main</span><span class="p">(</span><span class="t">String</span><span class="p">[] </span><span class="v">args</span><span class="p">) {</span></div>
<svg class="abs" style="left:97px;top:701px" width="15" height="19" viewBox="0 0 15 19"><path d="M7.5 0.8a5.6 5.6 0 0 0-3.3 10.1c.6.5.9 1 .9 1.7v.6h4.8v-.6c0-.7.3-1.2.9-1.7A5.6 5.6 0 0 0 7.5.8z" fill="#f4f4f6"/><rect x="5" y="14.2" width="5" height="3.6" rx="1.2" fill="none" stroke="#f4f4f6" stroke-width="1.4"/></svg>
<div class="abs" style="left:746px;top:62px;width:1px;height:783px;background:#24262c"></div>
<div class="abs" style="left:747px;top:634px;width:14px;height:2px;background:#4a4c55"></div>
</div>
<div class="panel" style="left:308px;top:908px;width:1596px;height:270px">
<div class="abs" style="left:10px;top:11px;width:62px;height:33px;border-radius:6px;background:#2f313a;color:#fff;font-weight:bold;font-size:16.25px;line-height:33px;text-align:center">输出</div>
<div class="cl mono" style="left:25.6px;top:54.65px;color:#6ba2ea">true</div>
<div class="cl mono" style="left:25.6px;top:82.15px;color:#6ba2ea">true</div>
<div class="cl mono" style="left:25.6px;top:109.65px;color:#6ba2ea">true</div>
<svg class="abs" style="left:1560px;top:21px" width="12" height="12" viewBox="0 0 12 12"><path d="M1.6 1.6l8.8 8.8M10.4 1.6l-8.8 8.8" stroke="#f2f3f6" stroke-width="2.6" stroke-linecap="square"/></svg>
</div>
<div class="panel" style="left:1911px;top:54px;width:594px;height:1120px">
<div class="abs" style="left:0;top:880px;width:594px;height:240px;background:radial-gradient(ellipse 300px 150px at 250px 175px,rgba(115,80,72,.30),rgba(80,60,100,.12) 60%,rgba(0,0,0,0) 100%)"></div>
<div class="abs" style="left:0;top:880px;width:594px;height:240px;background:radial-gradient(ellipse 240px 150px at 470px 185px,rgba(85,60,135,.20),rgba(0,0,0,0) 100%)"></div>
<svg class="abs" style="left:21px;top:20px" width="17" height="17" viewBox="0 0 17 17"><path d="M8.5 .5v4.8M8.5 11.7v5M.5 8.5h3.3M13.5 8.5h3.1M3 2.8l2.6 2.6M14 2.8l-2.6 2.6M11.4 11.6l2.8 2.8" stroke="#f2f3f6" stroke-width="1.9" fill="none"/><path d="M1.7 14.9L9.4 7.8" stroke="#f2f3f6" stroke-width="2.3"/></svg>
<div class="abs" style="left:50.5px;top:15.8px;line-height:28px;font-weight:bold;font-size:17.8px;color:#fff;white-space:nowrap">AI 助手</div>
<svg class="abs" style="left:478px;top:18px" width="21" height="20" viewBox="0 0 21 20"><defs><linearGradient id="g2" x1="0" y1="0" x2="1" y2="0"><stop offset="0" stop-color="#86aef6"/><stop offset=".45" stop-color="#e6e4f4"/><stop offset=".8" stop-color="#f2a882"/><stop offset="1" stop-color="#cf78c8"/></linearGradient><linearGradient id="g3" gradientUnits="userSpaceOnUse" x1="6" y1="0" x2="14" y2="0"><stop offset="0" stop-color="#c9b4e6"/><stop offset="1" stop-color="#eda2b0"/></linearGradient></defs><path d="M10.6 17H2.8V9.15a7.55 7.55 0 0 1 15.1 0v.4" fill="none" stroke="url(#g2)" stroke-width="1.4"/><path d="M6 9h8.1" stroke="url(#g3)" stroke-width="1.5"/><path d="M6 12.3h4.6" stroke="#c6c6e4" stroke-width="1.5"/><path d="M16.2 12.7v6M13.2 15.7h6" stroke="#f27ba4" stroke-width="1.4"/></svg>
<svg class="abs" style="left:514px;top:17.4px" width="21" height="20" viewBox="0 0 21 20"><path d="M3.9 15.6A8.5 8.5 0 1 0 2.7 8.8" fill="none" stroke="#eceef4" stroke-width="1.6"/><path d="M.2 8.6l4.3-.9-1.8 4z" fill="#eceef4"/><path d="M10.5 6.2v4.4h4.2" fill="none" stroke="#e9e6fb" stroke-width="2"/></svg>
<svg class="abs" style="left:553.8px;top:22.8px" width="11" height="11" viewBox="0 0 11 11"><path d="M1.5 1.5l8 8M9.5 1.5l-8 8" stroke="#e9ebef" stroke-width="2.7" stroke-linecap="square"/></svg>
<div class="abs" style="right:63px;top:78.4px;line-height:25px;font-size:15.5px;-webkit-text-stroke:.5px #dfe1e7;color:#dfe1e7;white-space:nowrap">okokabcd</div>
<div class="abs" style="left:539px;top:75px;width:30px;height:30px;border-radius:50%;background:#e09a3c;overflow:hidden"><div class="abs" style="left:12.1px;top:8px;width:5.8px;height:5.8px;border-radius:50%;background:#c88434"></div><div class="abs" style="left:7px;top:16.2px;width:15px;height:6.2px;border-radius:7.5px 7.5px 0 0 / 6px 6px 0 0;background:#3a1a02"></div></div>
<div class="abs" style="left:419px;top:114.9px;width:150px;height:50.4px;border-radius:10px 2px 10px 10px;background:#2f313a;color:#fff;font-weight:bold;font-size:16.25px;line-height:52px;text-align:center;white-space:nowrap">帮我检查一下代码</div>
<div class="abs" style="left:25px;top:204.5px;width:30px;height:30px;border-radius:50%;background:#ac83f6"><svg class="abs" style="left:6.6px;top:7px" width="17" height="17" viewBox="0 0 17 17"><path d="M8.5 .5v4.8M8.5 11.7v5M.5 8.5h3.3M13.5 8.5h3.1M3 2.8l2.6 2.6M14 2.8l-2.6 2.6M11.4 11.6l2.8 2.8" stroke="#7646cf" stroke-width="1.9" fill="none"/><path d="M1.7 14.9L9.4 7.8" stroke="#3c1292" stroke-width="2.3"/></svg></div>
<div class="abs" style="left:62.6px;top:208.4px;line-height:26px;font-weight:bold;font-size:15px;color:#e3e5ea;white-space:nowrap">AI 助手</div>
<div class="aip" style="left:25px;top:255.75px">好的，您的这段代码整体的思路是比较清晰的。</div>
<div class="aip" style="left:25px;top:295.75px">首先，通过遍历链表统计值为<span class="ic">k</span>的节点数量，然后通过滑动窗口的方</div>
<div class="aip" style="left:25px;top:326.75px">式找到包含最多<span class="ic">k</span>的窗口，最后计算需要的最少交换次数。</div>
<div class="aip" style="left:25px;top:366.75px">从代码结构和逻辑上看，有以下几点可以考虑优化或改进：</div>
<div class="aip" style="left:54.5px;top:406.75px">代码的可读性方面，可以适当添加一些注释来解释关键步骤的作用</div>
<div class="aip" style="left:54.5px;top:436.75px">和目的，比如在计算滑动窗口中<span class="ic">k</span>的数量的部分。</div>
<div class="aip" style="left:54.5px;top:477.75px">在处理输入的链表时，使用<span class="ic">ArrayList</span>可能不是最优选择，如</div>
<div class="aip" style="left:54.5px;top:508.75px">果链表的操作频繁，比如插入和删除节点，<span style="margin-left:-3.5px"></span><span class="ic">LinkedList</span>可能更</div>
<div class="aip" style="left:54.5px;top:538.75px">合适。但对于这个特定的问题，使用<span class="ic">ArrayList</span>影响不大。</div>
<div class="aip" style="left:54.5px;top:579.75px">可以考虑添加一些边界情况的处理，比如输入的链表长度为 0 或者</div>
<div class="aip" style="left:54.5px;top:609.75px"><span style="margin-left:-4.6px"></span><span class="ic">k</span>的值超出了节点值的范围等。</div>
<div class="aip" style="left:25px;top:649.75px">希望这些建议对您有帮助！</div>
<div class="aip" style="left:38px;top:406.75px">1.</div>
<div class="aip" style="left:38px;top:477.75px">2.</div>
<div class="aip" style="left:38px;top:579.75px">3.</div>
<div class="abtn" style="left:25px"><svg class="abs" style="left:7px;top:7.4px" width="16" height="16" viewBox="0 0 16 16"><path d="M2.1 6.9A6.1 6.1 0 0 1 13.6 5.3M13.9 9.1A6.1 6.1 0 0 1 2.4 10.7" fill="none" stroke="#eceef2" stroke-width="1.5"/><path d="M.3 7.6h3.6L2 5.2zM15.7 8.4h-3.6l1.9 2.4z" fill="#eceef2"/></svg></div>
<div class="abs" style="left:70px;top:698px;width:1px;height:12px;background:#34363f"></div>
<div class="abtn" style="left:86px"><svg class="abs" style="left:8.2px;top:8.6px" width="14" height="13" viewBox="0 0 14 13"><path d="M.9 5.2V13" stroke="#eceef2" stroke-width="1.8" fill="none"/><path d="M3.9 12.2V5.8L7.4.8C8.6.6 9.6 1.4 9.4 2.6L8.9 5.2h3.7c.6 0 .8.6.6 1.2l-1.8 5.2c-.2.4-.5.6-1 .6z" fill="none" stroke="#eceef2" stroke-width="1.5" stroke-linejoin="round"/></svg></div>
<div class="abtn" style="left:126px"><svg class="abs" style="left:8.6px;top:9.2px;transform:rotate(180deg)" width="14" height="13" viewBox="0 0 14 13"><path d="M.9 5.2V13" stroke="#eceef2" stroke-width="1.8" fill="none"/><path d="M3.9 12.2V5.8L7.4.8C8.6.6 9.6 1.4 9.4 2.6L8.9 5.2h3.7c.6 0 .8.6.6 1.2l-1.8 5.2c-.2.4-.5.6-1 .6z" fill="none" stroke="#eceef2" stroke-width="1.5" stroke-linejoin="round"/></svg></div>
<div class="sug" style="top:747px"><span>滑动窗口的大小为什么是 count_k ?</span><svg class="abs" style="left:516px;top:17px" width="12" height="11" viewBox="0 0 12 11"><path d="M.6 5.5h10.4M6.8 1.2l4.3 4.3-4.3 4.3" fill="none" stroke="#6c6f7a" stroke-width="1.3"/></svg></div>
<div class="sug" style="top:797px"><span>需要一点思路提示</span><svg class="abs" style="left:516px;top:17px" width="12" height="11" viewBox="0 0 12 11"><path d="M.6 5.5h10.4M6.8 1.2l4.3 4.3-4.3 4.3" fill="none" stroke="#6c6f7a" stroke-width="1.3"/></svg></div>
<div class="sug" style="top:847px"><span>给我一些代码提示吧</span><svg class="abs" style="left:516px;top:17px" width="12" height="11" viewBox="0 0 12 11"><path d="M.6 5.5h10.4M6.8 1.2l4.3 4.3-4.3 4.3" fill="none" stroke="#6c6f7a" stroke-width="1.3"/></svg></div>
<div class="abs" style="left:15.5px;top:1054.5px;width:564.5px;height:80px;border-radius:9px;background:linear-gradient(90deg,#2f7bff 0%,#3f83f8 45%,#f08a4b 72%,#e85aa8 90%,#b85ae8 100%);padding:1.6px"><div style="width:100%;height:100%;border-radius:7.5px;background:#1a1b20"></div></div>
<div class="abs" style="left:28.5px;top:1066px;line-height:28px;color:#7c7f8a;white-space:nowrap">你可以问我问题</div>
</div>
<div class="abs" style="left:2513px;top:55px;width:44px;height:68.5px;border-radius:14px;background:linear-gradient(180deg,#9fa3bb,#a898ae);padding:1.6px"><div style="width:100%;height:100%;border-radius:12.5px;background:#1b1c21"></div><svg class="abs" style="left:9.5px;top:14.5px" width="17" height="17" viewBox="0 0 17 17"><path d="M8.5 .5v4.8M8.5 11.7v5M.5 8.5h3.3M13.5 8.5h3.1M3 2.8l2.6 2.6M14 2.8l-2.6 2.6M11.4 11.6l2.8 2.8" stroke="#8fa9f3" stroke-width="1.9" fill="none"/><path d="M1.7 14.9L9.4 7.8" stroke="#f0808c" stroke-width="2.3"/></svg><div class="abs" style="left:12px;top:38px;font-weight:bold;font-size:15px;color:#fff">AI</div></div>
<svg class="abs" style="left:2522px;top:144px" width="17" height="17" viewBox="0 0 17 17"><path d="M2 4.5h13M2 8.5h13M2 12.5h13M5 2v13" stroke="#eceef2" stroke-width="1.8"/></svg>
<div class="abs" style="left:2213px;top:1100px;line-height:36px;font-size:24.5px;color:rgba(255,255,255,.8);white-space:nowrap;text-shadow:1px 1px 2px rgba(0,0,0,.55)">掘金技术社区 @ 薪炎乙志</div>
</body></html>
